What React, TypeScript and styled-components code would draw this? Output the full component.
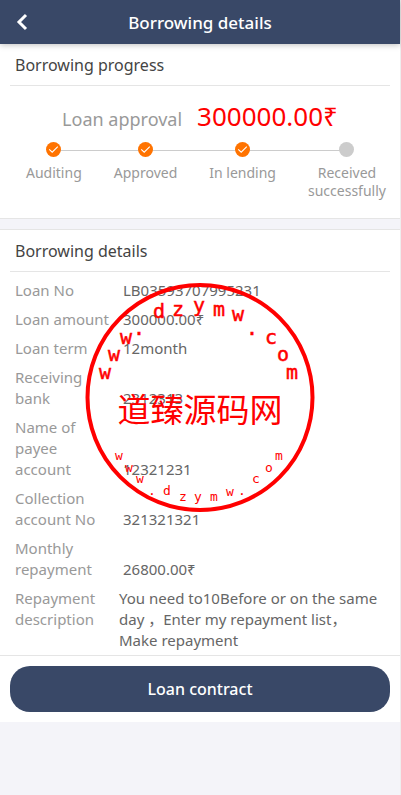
import React from "react";
import styled, { createGlobalStyle } from "styled-components";

const GlobalStyle = createGlobalStyle`
  * { box-sizing: border-box; }
  body {
    margin: 0;
    background: #f4f4f9;
    color: #444;
    font-family: "Noto Sans", "Open Sans", "Noto Sans CJK SC", sans-serif;
    font-size: 15px;
  }
`;

const Page = styled.div`
  min-height: 100vh;
  border-right: 1px solid #eee;
`;

const Header = styled.header`
  position: relative;
  z-index: 1;
  display: grid;
  grid-template-columns: 44px 1fr 44px;
  align-items: center;
  height: 44px;
  background: #394867;
  color: #fff;
  box-shadow: 0 1px 6px rgba(0, 0, 0, 0.25);
`;

const BackButton = styled.button`
  display: flex;
  align-items: center;
  justify-content: center;
  height: 44px;
  padding: 0;
  border: 0;
  background: none;
  color: inherit;
`;

const PageTitle = styled.h1`
  margin: 0;
  font-size: 17px;
  font-weight: 500;
  text-align: center;
`;

const Section = styled.section`
  position: relative;
  background: #fff;
  border-bottom: 1px solid #e5e5e5;
`;

const ProgressSection = styled(Section)`
  margin-bottom: 10px;
  padding-bottom: 18px;
`;

const DetailsSection = styled(Section)`
  border-top: 1px solid #e5e5e5;
  padding-bottom: 4px;
`;

const SectionTitle = styled.h2`
  margin: 0 10px;
  padding: 1px 5px 0;
  border-bottom: 1px solid #e5e5e5;
  font-size: 16px;
  font-weight: 400;
  line-height: 40px;
`;

const Approval = styled.p`
  display: flex;
  align-items: baseline;
  justify-content: center;
  gap: 15px;
  margin: 10px 0 0;
  color: #999;
  font-size: 18px;
  line-height: 40px;
`;

const Amount = styled.strong`
  color: #f00;
  font-size: 26px;
  font-weight: 400;
`;

const Steps = styled.ol`
  display: flex;
  justify-content: space-between;
  margin: 3px 14px 0 26px;
  padding: 0;
  list-style: none;
  color: #999;
  font-size: 14px;
  line-height: 18px;
  text-align: center;
`;

const Step = styled.li`
  display: flex;
  flex-direction: column;
  align-items: center;
  gap: 7px;
`;

const Track = styled.div`
  position: absolute;
  top: 106px;
  left: 54px;
  right: 54px;
  height: 1px;
  background: #ccc;
`;

const StepDot = styled.svg`
  position: relative;
  display: block;
`;

const Details = styled.dl`
  display: flex;
  flex-direction: column;
  gap: 8px;
  margin: 8px 15px 0;
  line-height: 21px;
`;

const Row = styled.div<{ $note?: boolean }>`
  display: grid;
  grid-template-columns: 99px 1fr;
  column-gap: ${(p) => (p.$note ? 5 : 9)}px;
  padding-right: ${(p) => (p.$note ? 4 : 0)}px;
  align-items: ${(p) => (p.$note ? "start" : "end")};
`;

const Term = styled.dt`
  color: #999;
`;

const Value = styled.dd`
  margin: 0;
  color: #666;
`;

const Footer = styled.footer`
  padding: 10px;
  background: #fff;
`;

const ContractButton = styled.button`
  display: block;
  width: 100%;
  height: 46px;
  border: 0;
  border-radius: 20px;
  background: #394867;
  color: #fff;
  font-family: inherit;
  font-size: 16px;
  font-weight: 500;
`;

const Stamp = styled.svg`
  position: absolute;
  top: 53px;
  left: 50%;
  transform: translateX(-50%);
  pointer-events: none;
`;

const UpperGlyph = styled.text`
  font: 20px "DejaVu Sans Mono", monospace;
  text-anchor: middle;
  stroke: #f00;
  stroke-width: 0.5;
`;

const LowerGlyph = styled(UpperGlyph)`
  font-size: 13px;
  stroke: none;
`;

const StampName = styled.text`
  font: 33px "Noto Sans CJK SC", sans-serif;
  text-anchor: middle;
`;

const steps = [
  { label: ["Auditing"], done: true },
  { label: ["Approved"], done: true },
  { label: ["In lending"], done: true },
  { label: ["Received", "successfully"], done: false },
];

const rows = [
  ["Loan No", "LB03593707995231"],
  ["Loan amount", "300000.00₹"],
  ["Loan term", "12month"],
  ["Receiving bank", "2312313"],
  ["Name of payee account", "12321231"],
  ["Collection account No", "321321321"],
  ["Monthly repayment", "26800.00₹"],
];

type Glyph = [string, number, number];

const upper: Glyph[] = [
  ["w", 20, 96], ["w", 29, 78], ["w", 41, 61], [".", 54, 52], ["d", 74, 35],
  ["z", 93, 33], ["y", 114, 29], ["m", 134, 33], ["w", 153, 38], [".", 167, 52],
  ["c", 186, 61], ["o", 198, 78], ["m", 207, 96],
];

const lower: Glyph[] = [
  ["w", 34, 177], ["w", 44, 189], ["w", 55, 200], [".", 67, 212], ["d", 82, 212],
  ["z", 98, 218], ["y", 113, 218], ["m", 129, 218], ["w", 145, 213], [".", 157, 212],
  ["c", 171, 200], ["o", 184, 189], ["m", 194, 177],
];

function SealStamp() {
  return (
    <Stamp width="230" height="229" viewBox="0 0 230 229" fill="#f00">
      <circle cx="115" cy="114.5" r="112.5" fill="none" stroke="#f00" strokeWidth="4" />
      {upper.map(([c, x, y], i) => (
        <UpperGlyph key={i} x={x} y={y}>{c}</UpperGlyph>
      ))}
      <StampName x="115" y="139">道臻源码网</StampName>
      {lower.map(([c, x, y], i) => (
        <LowerGlyph key={i} x={x} y={y}>{c}</LowerGlyph>
      ))}
    </Stamp>
  );
}

export default function App() {
  return (
    <>
      <GlobalStyle />
      <Page>
        <Header>
          <BackButton aria-label="Back">
            <svg width="12" height="18" viewBox="0 0 12 18" fill="none" stroke="currentColor" strokeWidth="3">
              <path d="M10 2 3 9l7 7" />
            </svg>
          </BackButton>
          <PageTitle>Borrowing details</PageTitle>
        </Header>
        <main>
          <ProgressSection>
            <SectionTitle>Borrowing progress</SectionTitle>
            <Approval>
              Loan approval <Amount>300000.00₹</Amount>
            </Approval>
            <Track />
            <Steps>
              {steps.map((s) => (
                <Step key={s.label[0]}>
                  <StepDot width="15" height="15" viewBox="0 0 15 15">
                    <circle cx="7.5" cy="7.5" r="7.5" fill={s.done ? "#ff7300" : "#ccc"} />
                    {s.done && <path d="m3.2 7.4 3 2.8 5.6-5.5" fill="none" stroke="#fff" strokeWidth="1.1" />}
                  </StepDot>
                  <div>
                    {s.label.map((line) => (
                      <div key={line}>{line}</div>
                    ))}
                  </div>
                </Step>
              ))}
            </Steps>
          </ProgressSection>
          <DetailsSection>
            <SectionTitle>Borrowing details</SectionTitle>
            <Details>
              {rows.map(([term, value]) => (
                <Row key={term}>
                  <Term>{term}</Term>
                  <Value>{value}</Value>
                </Row>
              ))}
              <Row $note>
                <Term>Repayment description</Term>
                <Value>You need to10Before or on the same day ，Enter my repayment list，Make repayment</Value>
              </Row>
            </Details>
            <SealStamp />
          </DetailsSection>
        </main>
        <Footer>
          <ContractButton>Loan contract</ContractButton>
        </Footer>
      </Page>
    </>
  );
}
